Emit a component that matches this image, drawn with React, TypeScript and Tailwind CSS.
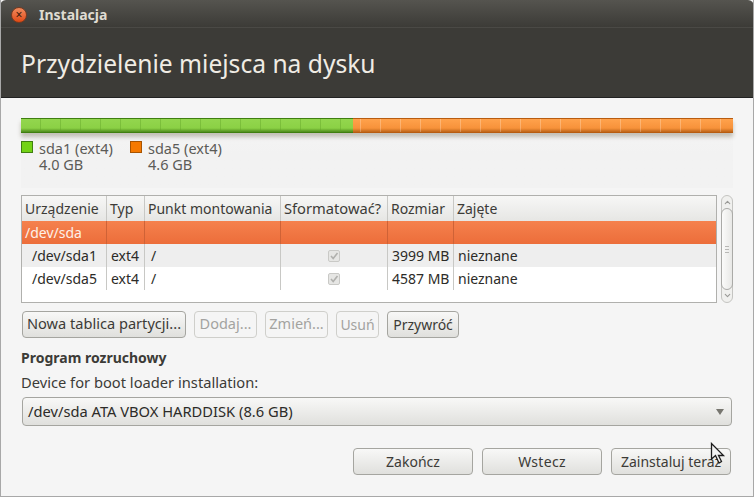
import React from 'react';
import { ChevronDown, ChevronUp } from 'lucide-react';

const columns = [
  { label: 'Urządzenie', width: 'w-[85px]', text: 'text-[14px]' },
  { label: 'Typ', width: 'w-[38px]', text: 'text-[14px]' },
  { label: 'Punkt montowania', width: 'w-[136px]', text: 'text-[14px]' },
  { label: 'Sformatować?', width: 'w-[107px]', text: 'text-[14.7px]' },
  { label: 'Rozmiar', width: 'w-[66px]', text: 'text-[14px]' },
  { label: 'Zajęte', width: 'flex-1', text: 'text-[14px]' },
];

const partitions = [
  { device: '/dev/sda1', size: '3999 MB', bg: 'bg-[#eeeeee]' },
  { device: '/dev/sda5', size: '4587 MB', bg: 'bg-white' },
];

const greenTicks = Array.from({ length: 17 });
const orangeTicks = Array.from({ length: 19 });

const Button = ({ label, width, disabled, text = 'text-[14px]' }: { label: string; width: string; disabled?: boolean; text?: string }) => (
  <button
    className={`h-[27px] pb-px rounded-[4px] border ${text} ${width} ${
      disabled
        ? 'border-[#cfcfcb] text-[#a3a3a0] bg-[#f5f5f5]'
        : 'border-[#a5a5a0] text-[#3c3b37] bg-gradient-to-b from-[#f8f8f7] to-[#e0e0dd]'
    }`}
  >
    {label}
  </button>
);

export default function App() {
  return (
    <div className="relative w-[754px] h-[497px] overflow-hidden bg-[#f5f5f5] text-[#3c3b37] font-['Noto_Sans',sans-serif] border-x border-b border-[#a8a8a8]">
      {/* Title bar */}
      <div className="h-[28px] flex items-center pl-[11px] pt-[2px] gap-[12px] bg-gradient-to-b from-[#55544f] to-[#3c3b37] border-b border-[#4a4945] -mx-px rounded-t-[6px]">
        <div className="w-[16px] h-[16px] rounded-full bg-gradient-to-b from-[#f08a5c] to-[#e0480f] border border-[#7a3a20] flex items-center justify-center text-[#3a1a0a] text-[12px] leading-none">
          ×
        </div>
        <span className="text-[14px] font-bold text-[#dfdbd2]">Instalacja</span>
      </div>

      {/* Header */}
      <div className="h-[70px] flex items-center pl-[21px] -mx-px bg-[#3c3b37] border-b border-[#222222]">
        <h1 className="text-[24.6px] text-[#f0ece4] leading-none pt-[3px]">Przydzielenie miejsca na dysku</h1>
      </div>

      <div className="pl-[20px] pr-[20px]">
        {/* Partition bar */}
        <div className="mt-[20px] h-[70px] bg-gradient-to-b from-[#ffffff00] via-[#f2f2f2] to-[#f2f2f2]">
          <div className="flex h-[15px] shadow-[0_4px_4px_rgba(80,70,40,0.3)]">
            <div className="flex w-[332px] overflow-hidden border-y border-[#3f7f10] bg-gradient-to-b from-[#93d64e] via-[#8bd145] via-70% to-[#4f8c1c]">
              {greenTicks.map((_, i) => (
                <div key={i} className="w-[20px] shrink-0 border-r border-[#5f9f25]/40" />
              ))}
            </div>
            <div className="flex flex-1 overflow-hidden border-y border-[#b85c10] bg-gradient-to-b from-[#ffa24c] via-[#f7923a] via-70% to-[#bd6518]">
              <div className="w-[8px] shrink-0 border-r border-white/25" />
              {orangeTicks.map((_, i) => (
                <div key={i} className="w-[20px] shrink-0 border-r border-white/25" />
              ))}
            </div>
          </div>
          <div className="flex mt-[7px] text-[14.5px] leading-[16px] text-[#5c5b57]">
            <div className="flex w-[109px]">
              <div className="w-[12px] h-[12px] mt-[1px] mr-[6px] bg-[#73d216] border border-[#3f7f10]" />
              <div>
                <div>sda1 (ext4)</div>
                <div>4.0 GB</div>
              </div>
            </div>
            <div className="flex">
              <div className="w-[12px] h-[12px] mt-[1px] mr-[6px] bg-[#f57900] border border-[#a85400]" />
              <div>
                <div>sda5 (ext4)</div>
                <div>4.6 GB</div>
              </div>
            </div>
          </div>
        </div>

        {/* Partition table and scrollbar */}
        <div className="flex mt-[7px] gap-[4px]">
          <div className="w-[696px] h-[108px] border border-[#b0b0ad] bg-white text-[14px]">
            <div className="flex h-[25px] bg-gradient-to-b from-[#f7f7f6] to-[#e6e6e4]">
              {columns.map(col => (
                <div key={col.label} className={`${col.width} ${col.text} pl-[3px] leading-[25px] border-r border-[#c8c8c5] last:border-r-0 whitespace-nowrap`}>
                  {col.label}
                </div>
              ))}
            </div>
            <div className="flex h-[23px] bg-gradient-to-b from-[#f5814d] to-[#ec6d3a] text-[#fdf0e8]">
              {columns.map((col, i) => (
                <div key={col.label} className={`${col.width} pl-[3px] leading-[23px] border-r border-[#cf6236] last:border-r-0`}>
                  {i === 0 ? '/dev/sda' : ''}
                </div>
              ))}
            </div>
            {partitions.map(row => (
              <div key={row.device} className={`flex h-[23px] leading-[23px] text-[#2c2b28] ${row.bg}`}>
                <div className="w-[85px] pl-[10px] border-r border-[#c8c8c5]">{row.device}</div>
                <div className="w-[38px] pl-[4px] border-r border-[#c8c8c5]">ext4</div>
                <div className="w-[136px] pl-[6px] border-r border-[#c8c8c5]">/</div>
                <div className="w-[107px] flex items-center justify-center border-r border-[#c8c8c5]">
                  <svg width="12" height="12" viewBox="0 0 12 12">
                    <rect x="0.5" y="0.5" width="11" height="11" rx="1.5" fill="#e6e6e4" stroke="#c9c9c6" />
                    <path d="M3 6 L5.2 8.6 L9.5 3" fill="none" stroke="#b0b0ad" strokeWidth="1.6" />
                  </svg>
                </div>
                <div className="w-[66px] pl-[4px] border-r border-[#c8c8c5] whitespace-nowrap">{row.size}</div>
                <div className="flex-1 pl-[4px]">nieznane</div>
              </div>
            ))}
          </div>
          <div className="w-[12px] h-[108px] rounded-full border border-[#c4c4c1] bg-[#f0f0ee] flex flex-col items-center relative">
            <ChevronUp size={9} strokeWidth={3} className="text-[#9a9a97] mt-[2px]" />
            <div className="absolute left-[-1px] top-[12px] w-[12px] h-[82px] rounded-full border border-[#aaaaa7] bg-gradient-to-r from-[#fbfbfa] to-[#e8e8e6] flex flex-col items-center justify-center gap-[2px]">
              <div className="w-[4px] h-px bg-[#b8b8b5]" />
              <div className="w-[4px] h-px bg-[#b8b8b5]" />
              <div className="w-[4px] h-px bg-[#b8b8b5]" />
            </div>
            <ChevronDown size={9} strokeWidth={3} className="text-[#9a9a97] mt-auto mb-[2px]" />
          </div>
        </div>

        {/* Partition actions */}
        <div className="flex gap-[8px] mt-[8px] ml-px">
          <Button label="Nowa tablica partycji..." width="w-[164px]" text="text-[14.6px]" />
          <Button label="Dodaj..." width="w-[63px]" disabled text="text-[14.5px]" />
          <Button label="Zmień..." width="w-[63px]" disabled text="text-[14.5px]" />
          <Button label="Usuń" width="w-[43px]" disabled />
          <Button label="Przywróć" width="w-[72px]" />
        </div>

        {/* Boot loader */}
        <div className="mt-[11px] text-[14px] font-bold leading-[18px]">Program rozruchowy</div>
        <div className="mt-[5px] text-[14.7px] leading-[20px]">Device for boot loader installation:</div>
        <div className="mt-[5px] ml-px w-[710px] h-[29px] flex items-center justify-between pl-[5px] pr-[7px] text-[14.7px] rounded-[4px] border border-[#a5a5a0] bg-gradient-to-b from-[#f8f8f7] to-[#e0e0dd] text-[#2c2b28]">
          <span>/dev/sda ATA VBOX HARDDISK (8.6 GB)</span>
          <div className="w-0 h-0 border-x-[4px] border-x-transparent border-t-[6px] border-t-[#77766f]" />
        </div>

        {/* Wizard buttons */}
        <div className="flex justify-end gap-[9px] mt-[22px] pr-[2px]">
          <Button label="Zakończ" width="w-[120px]" />
          <Button label="Wstecz" width="w-[120px]" text="text-[14px] tracking-[0.3px]" />
          <Button label="Zainstaluj teraz" width="w-[120px]" />
        </div>
      </div>

      {/* Mouse pointer */}
      <svg className="absolute left-[709px] top-[442px]" width="16" height="24" viewBox="0 0 16 24">
        <path d="M1.5 1.5 L1.5 17 L5.5 13.5 L9 21 L11.5 19.5 L8.5 13.5 L13.5 13.5 Z" fill="#f2f2f2" stroke="#1c1c1c" strokeWidth="1.3" />
      </svg>
    </div>
  );
}
